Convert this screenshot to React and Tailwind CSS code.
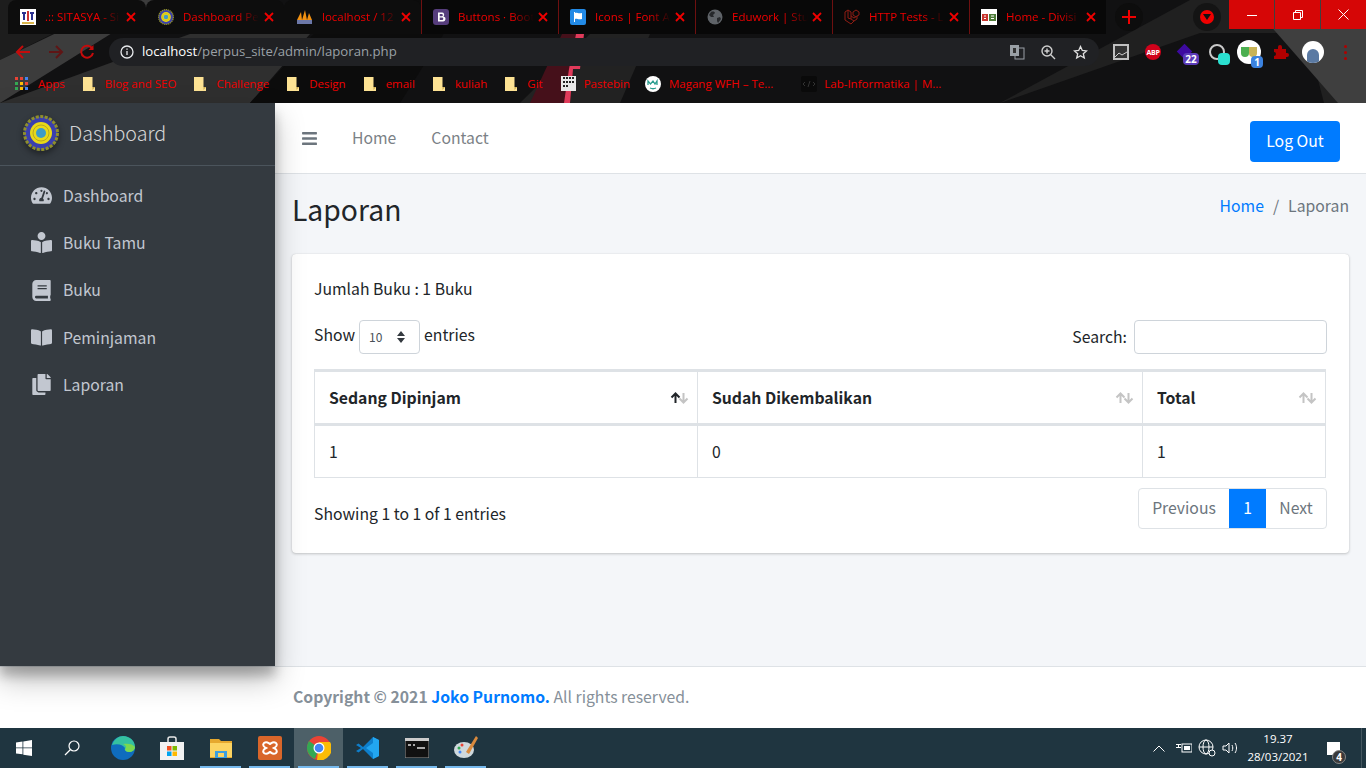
import { FaBars, FaBook, FaBookOpen, FaBookReader, FaCopy, FaTachometerAlt } from 'react-icons/fa';

const TABS = [
  { title: '.:: SITASYA - Si', icon: 'sitasya' },
  { title: 'Dashboard Pe', icon: 'logo' },
  { title: 'localhost / 12', icon: 'pma' },
  { title: 'Buttons · Boot', icon: 'bootstrap' },
  { title: 'Icons | Font A', icon: 'flag' },
  { title: 'Eduwork | Stu', icon: 'globe' },
  { title: 'HTTP Tests - L', icon: 'laravel' },
  { title: 'Home - Divisi', icon: 'home' },
];

const BOOKMARKS = ['Blog and SEO', 'Challenge', 'Design', 'email', 'kuliah', 'Git'];

const MENU = [
  { label: 'Dashboard', Icon: FaTachometerAlt },
  { label: 'Buku Tamu', Icon: FaBookReader },
  { label: 'Buku', Icon: FaBook },
  { label: 'Peminjaman', Icon: FaBookOpen },
  { label: 'Laporan', Icon: FaCopy },
];

function Logo({ size = 16 }) {
  return (
    <svg width={size} height={size} viewBox="0 0 36 36" className="shrink-0">
      <circle cx="18" cy="18" r="16.500" fill="#3a3fae" stroke="#8f8f2c" strokeWidth="3" strokeDasharray="3 1.500" />
      <circle cx="18" cy="18" r="11" fill="#e8d818" />
      <circle cx="18" cy="18" r="8" fill="none" stroke="#b9a820" />
      <circle cx="18" cy="18" r="5" fill="#3d9bc8" />
    </svg>
  );
}

function Favicon({ name }) {
  if (name === 'logo') return <Logo />;
  if (name === 'sitasya') {
    return (
      <svg width="16" height="16" viewBox="0 0 16 16" className="shrink-0">
        <rect width="16" height="16" fill="#fff" />
        <path d="M2 3h4v2H5v6H3V5H2zM10 3h4v2h-1v6h-2V5h-1z" fill="#2a2f8f" />
        <rect x="7" y="2" width="2" height="10" fill="#c33" />
        <rect x="2" y="13" width="12" height="2" fill="#d9b44a" />
      </svg>
    );
  }
  if (name === 'pma') {
    return (
      <svg width="17" height="16" viewBox="0 0 17 16" className="shrink-0">
        <path d="M1 11 5 3l1 8zM6 11l3-10 2 10zM11 11l2-7 3 7z" fill="#f29111" />
        <rect x="1" y="11" width="15" height="4" fill="#6c78a8" />
      </svg>
    );
  }
  if (name === 'bootstrap') {
    return (
      <svg width="16" height="16" viewBox="0 0 16 16" className="shrink-0">
        <rect width="16" height="16" rx="3" fill="#563d7c" />
        <path d="M5 3.500h4a2.200 2.200 0 0 1 1.400 3.900A2.400 2.400 0 0 1 9.300 12.500H5zM6.700 5v2.300h2a1.100 1.100 0 0 0 0-2.300zM6.700 8.600V11h2.400a1.200 1.200 0 0 0 0-2.400z" fill="#fff" fillRule="evenodd" />
      </svg>
    );
  }
  if (name === 'flag') {
    return (
      <svg width="16" height="16" viewBox="0 0 16 16" className="shrink-0">
        <rect width="16" height="16" rx="2" fill="#228ae6" />
        <path d="M4 3h1v10H4zM5 4c2-1 3 1 7 0v6c-4 1-5-1-7 0z" fill="#fff" />
      </svg>
    );
  }
  if (name === 'globe') {
    return (
      <svg width="16" height="16" viewBox="0 0 16 16" className="shrink-0">
        <circle cx="8" cy="8" r="7.500" fill="#5f6368" />
        <path d="M4 3c2-1 4 0 4 1L6 6 7 8 4 8 2 6zM10 9l3-1 1 2-3 4-1-2z" fill="#26282b" />
      </svg>
    );
  }
  if (name === 'laravel') {
    return (
      <svg width="16" height="16" viewBox="0 0 16 16" fill="none" stroke="#8f1d14" strokeWidth="1" className="shrink-0">
        <path d="M1 3l3-2 3 2v7l3 2 3-2V7l-3 2-3-2M1 3v8l6 4 3-3M13 7l2-1V3l-3-2-3 2v3l3 2M4 1v8l3 1" />
      </svg>
    );
  }
  return (
    <svg width="16" height="16" viewBox="0 0 16 16" className="shrink-0">
      <rect width="16" height="16" fill="#fff" />
      <rect x="1" y="5" width="6" height="7" fill="#c8352e" />
      <rect x="8" y="5" width="7" height="7" fill="#4f7d3a" />
      <path d="M3 7h2M3 9.500h2M10 7h3M10 9.500h3" stroke="#fff" strokeWidth="1" />
    </svg>
  );
}

function TabClose() {
  return (
    <svg width="10" height="10" viewBox="0 0 10 10" stroke="#f00000" strokeWidth="1.800" className="shrink-0">
      <path d="M1 1l8 8M9 1l-8 8" />
    </svg>
  );
}

function Folder() {
  return (
    <svg width="12" height="14" viewBox="0 0 12 14" className="shrink-0">
      <path d="M0 0h9.500v10H12v4H0z" fill="#fde293" />
      <path d="M9.500 10H12l-2.500 3z" fill="#c9a94f" />
    </svg>
  );
}

function SortArrows({ up = false }) {
  const off = '#c4c4c4';
  return (
    <svg width="19" height="12" viewBox="0 0 19 12" fill="none" strokeWidth="2" className="shrink-0">
      <path d="M5.500 11V2M1.500 5.500l4-4 4 4" stroke={up ? '#212529' : off} />
      <path d="M13.500 1v9M9.500 6.500l4 4 4-4" stroke={off} />
    </svg>
  );
}

function TaskIcon({ children, active, running = true }) {
  return (
    <div className={`relative flex h-10 w-[49px] items-center justify-center ${active ? 'bg-[#4d6068]' : ''}`}>
      {children}
      {running && <div className="absolute right-[4px] bottom-0 left-[4px] h-[2px] bg-[#76b9ed]" />}
    </div>
  );
}

function ChromeBar() {
  return (
    <div className="relative h-[103px] shrink-0 overflow-hidden bg-[#111112] font-['Open_Sans',sans-serif] text-[#f00000]">
      {/* wallpaper of the browser theme */}
      <svg className="absolute inset-0" width="1366" height="103" viewBox="0 0 1366 103">
        <path d="M0 0h120L0 60z" fill="#1d1d1d" />
        <path d="M0 60 125 0h40L0 103z" fill="#3c3c3c" />
        <path d="M0 103 190 34h120L250 103z" fill="#2f2f2f" />
        <path d="M250 103 345 0h120L400 103z" fill="#0c0c0c" />
        <path d="M520 103 590 34h60l-30 69z" fill="#222" />
        <path d="M562 34h14l-6 69h-40z" fill="#45101a" />
        <path d="M576 34h8l-4 35h-7l-3 34h-6l5-34z" fill="#e03a5a" />
        <path d="M1000 103 1190 0h176v103h-42l-18-70h-106z" fill="#202020" />
        <path d="M1248 0h118v103h-28z" fill="#3f3f3f" />
      </svg>

      <div className="relative flex h-[34px] pl-2">
        {TABS.map((tab, i) => (
          <div
            key={tab.title}
            className={`flex h-[34px] items-center pr-[10px] ${i < 2 ? 'w-[138px]' : 'w-[137px]'} ${i < 3 ? 'rounded-t-lg bg-[#0d0d0d] pl-3' : 'border-l border-[#6e1010] bg-[#080808] pl-[11px]'}`}
          >
            <Favicon name={tab.icon} />
            <span className="ml-[9px] w-[76px] overflow-hidden text-[11.500px] whitespace-nowrap [mask-image:linear-gradient(to_right,black_70%,transparent)]">
              {tab.title}
            </span>
            <span className="ml-auto"><TabClose /></span>
          </div>
        ))}
        <div className="mt-[3px] ml-[9px] flex h-7 w-7 items-center justify-center rounded-full bg-[#0d0d0d]">
          <svg width="14" height="14" viewBox="0 0 14 14" stroke="#f00000" strokeWidth="2"><path d="M7 0v14M0 7h14" /></svg>
        </div>
        <div className="mt-[3px] ml-[50px] flex h-7 w-7 items-center justify-center rounded-full bg-[#141414]">
          <div className="flex h-[14px] w-[14px] items-center justify-center rounded-full bg-[#f00000]">
            <svg width="8" height="6" viewBox="0 0 8 6"><path d="M0 0h8L4 6z" fill="#111" /></svg>
          </div>
        </div>
        <div className="absolute top-0 right-0 flex h-[29px] gap-px">
          <div className="flex w-[45px] items-center justify-center bg-[#d60606]">
            <svg width="10" height="10" viewBox="0 0 10 10" stroke="#fff"><path d="M0 5.500h10" /></svg>
          </div>
          <div className="flex w-[45px] items-center justify-center bg-[#d60606]">
            <svg width="10" height="10" viewBox="0 0 10 10" fill="none" stroke="#fff"><path d="M.5 2.500h7v7h-7zM2.500 2.500v-2h7v7h-2" /></svg>
          </div>
          <div className="flex w-[45px] items-center justify-center bg-[#d60606]">
            <svg width="11" height="11" viewBox="0 0 11 11" stroke="#fff"><path d="M.5.5l10 10M10.500.5l-10 10" /></svg>
          </div>
        </div>
      </div>

      <div className="relative flex h-9 items-center">
        <svg className="ml-[15px]" width="16" height="16" viewBox="0 0 16 16" fill="none" stroke="#c50b0b" strokeWidth="2"><path d="M15 8H2M8 2 2 8l6 6" /></svg>
        <svg className="ml-[17px]" width="16" height="16" viewBox="0 0 16 16" fill="none" stroke="#5f1515" strokeWidth="2"><path d="M1 8h13M8 2l6 6-6 6" /></svg>
        <svg className="ml-[15px]" width="16" height="16" viewBox="0 0 16 16" fill="none" stroke="#c50b0b" strokeWidth="2"><path d="M13.500 5A6 6 0 1 0 14 9" /><path d="M14.500 1v5h-5" fill="#c50b0b" stroke="none" /></svg>
        <div className="ml-[14px] flex h-7 w-[990px] items-center rounded-full bg-[#202124] pr-[11px] pl-[11px]">
          <svg width="14" height="14" viewBox="0 0 14 14" fill="none" stroke="#e8eaed" strokeWidth="1.300"><circle cx="7" cy="7" r="6" /><path d="M7 6v4M7 3.500v1.300" /></svg>
          <span className="ml-[8px] text-[13.200px] text-[#9aa0a6]"><span className="text-white">localhost</span>/perpus_site/admin/laporan.php</span>
          <svg className="ml-auto" width="16" height="16" viewBox="0 0 16 16"><rect x="1" y="1" width="9" height="11" fill="#9aa0a6" /><rect x="6" y="4" width="9" height="11" fill="none" stroke="#9aa0a6" /><path d="M4 4h3v5H4z" fill="#333" /></svg>
          <svg className="ml-[16px]" width="15" height="15" viewBox="0 0 15 15" fill="none" stroke="#d0d0d0" strokeWidth="1.400"><circle cx="6" cy="6" r="5" /><path d="M9.500 9.500 14 14M3.500 6h5M6 3.500v5" /></svg>
          <svg className="ml-[17px]" width="15" height="15" viewBox="0 0 15 15" fill="none" stroke="#e0e0e0" strokeWidth="1.300"><path d="m7.500 1.500 1.800 4 4.200.4-3.200 2.800 1 4.300-3.800-2.300-3.800 2.300 1-4.300L1.500 5.900l4.200-.4z" /></svg>
        </div>
        <div className="relative ml-[14px] flex h-4 w-4 items-end justify-center border-2 border-[#c0c0c0] bg-[#333]">
          <svg width="12" height="8" viewBox="0 0 12 8" fill="none" stroke="#ccc"><path d="M0 7l4-4 3 2 5-3" /></svg>
        </div>
        <div className="ml-[16px] flex h-4 w-4 items-center justify-center rounded-full bg-[#d0021b] text-[7px] leading-none font-bold tracking-tighter text-white">ABP</div>
        <div className="relative ml-[16px] h-[14px] w-4">
          <div className="absolute top-px left-0 h-[11px] w-[11px] translate-x-[2px] rotate-45 bg-[#3d0aa0]" />
          <div className="absolute top-[8px] left-[6px] flex h-3 w-4 items-center justify-center rounded-sm bg-[#5b3bb8] text-[10px] leading-none font-bold text-white">22</div>
        </div>
        <div className="relative ml-[16px] h-4 w-4 rounded-full border-2 border-[#c9c9c9]">
          <div className="absolute top-[7px] left-[7px] h-3 w-3 rounded-sm bg-[#2be0d0]" />
        </div>
        <div className="relative ml-[12px] flex h-6 w-6 items-center justify-center rounded-full bg-white">
          <div className="h-[10px] w-[8px] rounded-b-md bg-[#4caf50]" />
          <div className="h-[10px] w-[8px] rounded-b-md bg-[#c9b458]" />
          <div className="absolute right-[-2px] bottom-[-4px] flex h-3 w-3 items-center justify-center rounded-sm bg-[#3b82e0] text-[10px] leading-none font-bold text-white">1</div>
        </div>
        <svg className="ml-[12px]" width="16" height="16" viewBox="0 0 16 16"><path d="M1 5h4V3a2 2 0 0 1 4 0v2h4v4h1a2 2 0 0 1 0 4h-1v2H1v-3a2 2 0 0 0 0-4z" fill="#b00000" /></svg>
        <div className="ml-[13px] h-[22px] w-[22px] overflow-hidden rounded-full bg-white">
          <div className="mx-auto mt-[8px] h-[14px] w-[12px] rounded-t-md bg-[#5b7aa3]" />
        </div>
        <div className="ml-[20px] flex flex-col gap-[3px]">
          <div className="h-[3px] w-[3px] rounded-full bg-[#b00000]" />
          <div className="h-[3px] w-[3px] rounded-full bg-[#b00000]" />
          <div className="h-[3px] w-[3px] rounded-full bg-[#b00000]" />
        </div>
      </div>

      <div className="relative flex h-[33px] items-center pb-[6px] pl-[15px] text-[11.500px]">
        <svg width="13" height="13" viewBox="0 0 13 13">
          <rect width="3" height="3" fill="#ea4335" /><rect x="5" width="3" height="3" fill="#ea4335" /><rect x="10" width="3" height="3" fill="#4285f4" />
          <rect y="5" width="3" height="3" fill="#34a853" /><rect x="5" y="5" width="3" height="3" fill="#fbbc05" /><rect x="10" y="5" width="3" height="3" fill="#ea4335" />
          <rect y="10" width="3" height="3" fill="#34a853" /><rect x="5" y="10" width="3" height="3" fill="#fbbc05" /><rect x="10" y="10" width="3" height="3" fill="#4285f4" />
        </svg>
        <span className="ml-[10px]">Apps</span>
        {BOOKMARKS.map((label) => (
          <span key={label} className="ml-[18px] flex items-center">
            <Folder />
            <span className="ml-[10px]">{label}</span>
          </span>
        ))}
        <svg className="ml-[18px]" width="15" height="15" viewBox="0 0 15 15"><rect width="15" height="15" fill="#e8e8e8" /><path d="M2 2h11M2 6h11M2 10h6" stroke="#222" strokeWidth="2" strokeDasharray="2 1" /></svg>
        <span className="ml-[8px]">Pastebin</span>
        <div className="ml-[15px] flex h-4 w-4 items-center justify-center rounded-full bg-white">
          <svg width="12" height="12" viewBox="0 0 12 12" fill="none" stroke="#2a9d8f" strokeWidth="1.300"><path d="M1 7V3l2.500 3L6 3l2 3 2-3v4M3 10c2 1 4 1 6 0" /></svg>
        </div>
        <span className="ml-[8px]">Magang WFH – Te...</span>
        <svg className="ml-[28px]" width="16" height="16" viewBox="0 0 16 16"><rect width="16" height="16" rx="2" fill="#0a0a0a" /><path d="M4 6 2 8l2 2M12 6l2 2-2 2M9 5 7 11" stroke="#333" fill="none" /></svg>
        <span className="ml-[7px]">Lab-Informatika | M...</span>
      </div>
    </div>
  );
}

function Sidebar() {
  return (
    <aside className="relative z-10 w-[275px] shrink-0 bg-[#343a40] shadow-[0_14px_28px_rgba(0,0,0,0.25),0_10px_10px_rgba(0,0,0,0.22)]">
      <div className="flex h-[63px] items-center border-b border-[#4b545c] pb-[2px] pl-[23px]">
        <span className="rounded-full shadow-[0_3px_6px_rgba(0,0,0,0.4)]"><Logo size={36} /></span>
        <span className="ml-[10px] text-[19.700px] leading-none font-light text-[rgba(255,255,255,0.8)]">Dashboard</span>
      </div>
      <nav className="flex flex-col pt-[6px]">
        {MENU.map(({ label, Icon }) => (
          <div key={label} className="flex h-[47.300px] items-center text-[#c2c7d0]">
            <span className="ml-[30px] flex w-[22px] justify-center"><Icon className="text-[21px]" /></span>
            <span className="ml-[11px] text-[15.750px] leading-none">{label}</span>
          </div>
        ))}
      </nav>
    </aside>
  );
}

function Laporan() {
  const thClass = 'border border-b-[3px] border-t-[3px] border-[#dee2e6] pl-[14px] pr-[8px] text-left font-bold';
  const tdClass = 'border border-[#dee2e6] pl-[14px] h-[53px]';
  return (
    <div className="flex-1 bg-[#f4f6f9] pr-[17px] pl-[17px]">
      <div className="flex h-[80px] items-start justify-between">
        <h1 className="mt-[16px] text-[28.300px] leading-[38px] text-[#212529]">Laporan</h1>
        <div className="mt-[21px] flex text-[15.750px] leading-[22px] text-[#6c757d]">
          <span className="text-[#007bff]">Home</span>
          <span className="px-[9px]">/</span>
          <span>Laporan</span>
        </div>
      </div>
      <div className="h-[299px] rounded-[4px] bg-white px-[22px] pt-[24px] text-[15.750px] leading-[22px] text-[#212529] shadow-[0_0_1px_rgba(0,0,0,0.13),0_1px_3px_rgba(0,0,0,0.2)]">
        <p>Jumlah Buku : 1 Buku</p>
        <div className="mt-[20px] flex items-start justify-between">
          <div className="flex items-center">
            <span className="-mt-[4px]">Show</span>
            <div className="mx-[4px] flex h-[34px] w-[61px] items-center rounded-[4px] border border-[#ced4da] pr-[14px] pl-[9px] text-[12px] text-[#495057]">
              <span>10</span>
              <svg className="ml-auto" width="8" height="12" viewBox="0 0 8 12" fill="#343a40"><path d="M4 0l4 5H0zM4 12 0 7h8z" /></svg>
            </div>
            <span className="-mt-[4px]">entries</span>
          </div>
          <div className="flex items-center">
            <span className="mr-[7px]">Search:</span>
            <div className="h-[34px] w-[193px] rounded-[4px] border border-[#ced4da]" />
          </div>
        </div>
        <table className="mt-[15px] w-[1012px] table-fixed border-collapse">
          <thead>
            <tr className="h-[54px]">
              <th className={`${thClass} w-[383px]`}><div className="flex items-center justify-between">Sedang Dipinjam<SortArrows up /></div></th>
              <th className={`${thClass} w-[445px]`}><div className="flex items-center justify-between">Sudah Dikembalikan<SortArrows /></div></th>
              <th className={thClass}><div className="flex items-center justify-between">Total<SortArrows /></div></th>
            </tr>
          </thead>
          <tbody>
            <tr>
              <td className={tdClass}>1</td>
              <td className={tdClass}>0</td>
              <td className={tdClass}>1</td>
            </tr>
          </tbody>
        </table>
        <div className="mt-[10px] flex items-start justify-between">
          <span className="mt-[15px]">Showing 1 to 1 of 1 entries</span>
          <div className="flex h-[41px] w-[189px] overflow-hidden rounded-[4px] border border-[#dee2e6] pb-px text-[#6c757d]">
            <span className="flex w-[90px] items-center justify-center">Previous</span>
            <span className="-my-px flex w-[37px] items-center justify-center bg-[#007bff] text-white">1</span>
            <span className="flex flex-1 items-center justify-center">Next</span>
          </div>
        </div>
      </div>
    </div>
  );
}

function Taskbar() {
  return (
    <div className="flex h-10 shrink-0 items-center bg-[#1f3540] text-white">
      <div className="flex h-10 w-[48px] items-center justify-center">
        <svg width="16" height="16" viewBox="0 0 16 16" fill="#fff"><path d="M0 2.500 6.500 1.600V7.500H0zM7.300 1.500 16 0v7.500H7.300zM0 8.300h6.500v6L0 13.500zM7.300 8.300H16V16l-8.700-1.300z" /></svg>
      </div>
      <div className="flex h-10 w-[48px] items-center justify-center">
        <svg width="16" height="16" viewBox="0 0 16 16" fill="none" stroke="#fff" strokeWidth="1.200"><circle cx="10" cy="6" r="5" /><path d="M6.500 9.500 1 15" /></svg>
      </div>
      <div className="ml-[2px] flex h-10 w-[49px] items-center justify-center">
        <svg width="24" height="24" viewBox="0 0 24 24">
          <circle cx="12" cy="12" r="12" fill="#0f6cbd" />
          <path d="M1 9C3 3 8 0 12 0c7 0 12 5 12 11 0 3-3 5-6 5-3 0-5-2-4-4-2-3-7-5-13-3z" fill="#35c1a0" />
          <path d="M24 11c0 3-3 5-6 5-2 0-4-1-4-3 2-1 1-4-2-5 5-1 10 0 12 3z" fill="#7ad94f" />
        </svg>
      </div>
      <div className="flex h-10 w-[49px] items-center justify-center">
        <svg width="24" height="24" viewBox="0 0 24 24">
          <path d="M8 7V3a2 2 0 0 1 2-2h4a2 2 0 0 1 2 2v4" fill="none" stroke="#e8e8e8" strokeWidth="1.500" />
          <rect y="6" width="24" height="18" fill="#f2f2f2" />
          <rect x="7" y="10" width="4.500" height="4.500" fill="#f25022" /><rect x="12.500" y="10" width="4.500" height="4.500" fill="#7fba00" />
          <rect x="7" y="15.500" width="4.500" height="4.500" fill="#00a4ef" /><rect x="12.500" y="15.500" width="4.500" height="4.500" fill="#ffb900" />
        </svg>
      </div>
      <TaskIcon>
        <svg width="22" height="20" viewBox="0 0 22 20">
          <path d="M0 1h9l2 2h11v17H0z" fill="#e6a82e" />
          <rect y="5" width="22" height="14" fill="#fcd462" />
          <rect x="5" y="13" width="12" height="7" fill="#3b9fe0" />
          <rect x="8" y="15" width="6" height="4" fill="#fcd462" />
        </svg>
      </TaskIcon>
      <TaskIcon>
        <svg width="24" height="24" viewBox="0 0 24 24">
          <rect width="24" height="24" rx="2" fill="#d9662a" />
          <path d="M6 7c3-2 4 0 6 1 2-1 3-3 6-1 2 2 0 4-2 5 2 1 4 3 2 5-3 2-4 0-6-1-2 1-3 3-6 1-2-2 0-4 2-5-2-1-4-3-2-5z" fill="none" stroke="#fff" strokeWidth="2" />
        </svg>
      </TaskIcon>
      <TaskIcon active>
        <svg width="24" height="24" viewBox="0 0 24 24">
          <circle cx="12" cy="12" r="12" fill="#ea4335" />
          <path d="M12 12 2 5a12 12 0 0 0 6 18z" fill="#34a853" />
          <path d="M12 6h11a12 12 0 0 1-13 18z" fill="#fbbc05" />
          <circle cx="12" cy="12" r="5.500" fill="#fff" />
          <circle cx="12" cy="12" r="4.300" fill="#4285f4" />
        </svg>
      </TaskIcon>
      <TaskIcon>
        <svg width="24" height="24" viewBox="0 0 24 24">
          <path d="M17 1 7 11 2.500 7.500 0 9l5 3-5 3 2.500 1.500L7 13l10 10 6-3V4z" fill="#0e7fcc" />
          <path d="M17 1l6 3v16l-6 3V7l-7 5 7 5z" fill="#22a6f0" />
        </svg>
      </TaskIcon>
      <TaskIcon>
        <svg width="24" height="20" viewBox="0 0 24 20">
          <rect width="24" height="20" fill="#111" stroke="#999" />
          <rect width="24" height="3" fill="#ccc" />
          <path d="M3 7h3M8 7h2M12 10h8" stroke="#ddd" strokeWidth="1.500" />
        </svg>
      </TaskIcon>
      <TaskIcon>
        <svg width="24" height="24" viewBox="0 0 24 24">
          <ellipse cx="10" cy="14" rx="10" ry="8" fill="#cfd8dc" />
          <circle cx="5" cy="12" r="1.500" fill="#34a853" /><circle cx="8" cy="9" r="1.500" fill="#ea4335" /><circle cx="6" cy="16" r="1.500" fill="#4285f4" />
          <path d="M22 0 12 16l3 2L24 2z" fill="#d98a3d" />
        </svg>
      </TaskIcon>

      <div className="ml-auto flex h-10 items-center">
        <svg width="12" height="7" viewBox="0 0 12 7" fill="none" stroke="#fff"><path d="M.5 6.500 6 1l5.500 5.500" /></svg>
        <svg className="ml-[11px]" width="16" height="12" viewBox="0 0 16 12" fill="#fff"><path d="M0 2h5v1H3v2h2v1H0V5h2V3H0z" /><rect x="6" y="2" width="10" height="8" fill="none" stroke="#fff" /><rect x="8" y="4" width="6" height="4" /></svg>
        <svg className="ml-[6px]" width="18" height="18" viewBox="0 0 18 18" fill="none" stroke="#fff"><circle cx="8" cy="8" r="7" /><ellipse cx="8" cy="8" rx="3" ry="7" /><path d="M1 8h14" /><circle cx="14" cy="14" r="3" fill="#1f3540" /></svg>
        <svg className="ml-[6px]" width="16" height="14" viewBox="0 0 16 14" fill="none" stroke="#fff"><path d="M1 5h3l3-3v10L4 9H1zM10 4c1 2 1 4 0 6M13 2c2 3 2 7 0 10" /></svg>
        <div className="ml-[5px] flex w-[70px] flex-col items-center font-['Open_Sans',sans-serif] text-[11.500px] leading-[18px]">
          <span>19.37</span>
          <span>28/03/2021</span>
        </div>
        <div className="relative mr-[21px] ml-[14px] h-[13px] w-[13px] bg-white">
          <div className="absolute top-[8px] left-[5px] flex h-[14px] w-[14px] items-center justify-center rounded-full border border-[#888] bg-[#3a3a3a] font-['Open_Sans',sans-serif] text-[10px] leading-none font-bold">4</div>
        </div>
        <div className="h-10 w-px bg-[#44565f]" />
        <div className="w-[4px]" />
      </div>
    </div>
  );
}

export default function App() {
  return (
    <div className="flex h-[768px] w-[1366px] flex-col overflow-hidden bg-white font-['Noto_Sans_CJK_SC','Noto_Sans',sans-serif]">
      <ChromeBar />
      <div className="flex h-[563px] shrink-0">
        <Sidebar />
        <div className="flex min-w-0 flex-1 flex-col">
          <div className="flex h-[71px] shrink-0 items-center border-b border-[#dee2e6] bg-white pr-[26px] text-[15.750px] text-[#7b8186]">
            <FaBars className="ml-[26px] text-[17px] text-[#6c757d]" />
            <span className="ml-[34px]">Home</span>
            <span className="ml-[35px]">Contact</span>
            <div className="mt-[6px] ml-auto flex h-[41px] w-[90px] items-center justify-center rounded-[4px] bg-[#007bff] text-white">Log Out</div>
          </div>
          <Laporan />
        </div>
      </div>
      <div className="flex h-[62px] shrink-0 items-center border-t border-[#dee2e6] bg-white pb-px pl-[293px] text-[15.750px] text-[#869099]">
        <b className="font-bold">Copyright © 2021&nbsp;</b>
        <b className="font-bold text-[#007bff]">Joko Purnomo.</b>
        <span>&nbsp;All rights reserved.</span>
      </div>
      <Taskbar />
    </div>
  );
}
